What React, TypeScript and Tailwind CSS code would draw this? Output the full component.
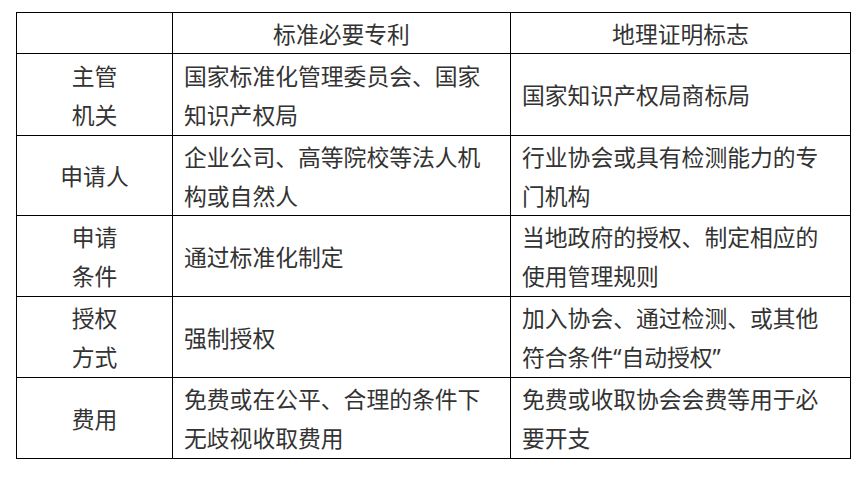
import type { ReactNode } from "react";

const Q = ({ children }: { children: ReactNode }) => (
  <span className="font-['Noto_Sans',sans-serif]">{children}</span>
);

const rows: { head: string[]; patent: ReactNode; geo: ReactNode; h: string }[] = [
  {
    head: ["主管", "机关"],
    patent: "国家标准化管理委员会、国家知识产权局",
    geo: "国家知识产权局商标局",
    h: "h-[82px]",
  },
  {
    head: ["申请人"],
    patent: "企业公司、高等院校等法人机构或自然人",
    geo: "行业协会或具有检测能力的专门机构",
    h: "h-[80px]",
  },
  {
    head: ["申请", "条件"],
    patent: "通过标准化制定",
    geo: "当地政府的授权、制定相应的使用管理规则",
    h: "h-[81px]",
  },
  {
    head: ["授权", "方式"],
    patent: "强制授权",
    geo: (
      <>
        加入协会、通过检测、或其他符合条件<Q>“</Q>自动授权<Q>”</Q>
      </>
    ),
    h: "h-[81px]",
  },
  {
    head: ["费用"],
    patent: "免费或在公平、合理的条件下无歧视收取费用",
    geo: "免费或收取协会会费等用于必要开支",
    h: "h-[81px]",
  },
];

export default function App() {
  return (
    <div className="min-h-screen bg-white pt-[12px] pl-[16px] font-['Noto_Sans_CJK_SC','Noto_Sans',sans-serif] text-[22.8px] leading-[39px] text-[#333]">
      <table className="table-fixed border-collapse w-[834px]">
        <colgroup>
          <col className="w-[156px]" />
          <col className="w-[338px]" />
          <col className="w-[340px]" />
        </colgroup>
        <thead>
          <tr className="h-[41px]">
            <th className="border border-black font-normal"></th>
            <th className="border border-black font-normal text-center">标准必要专利</th>
            <th className="border border-black font-normal text-center">地理证明标志</th>
          </tr>
        </thead>
        <tbody>
          {rows.map((r, i) => (
            <tr key={i} className={r.h}>
              <td className="border border-black text-center align-middle">
                {r.head.map((t, j) => (
                  <div key={j}>{t}</div>
                ))}
              </td>
              <td className="border border-black px-[11px] align-middle">{r.patent}</td>
              <td className="border border-black px-[11px] align-middle">{r.geo}</td>
            </tr>
          ))}
        </tbody>
      </table>
    </div>
  );
}
